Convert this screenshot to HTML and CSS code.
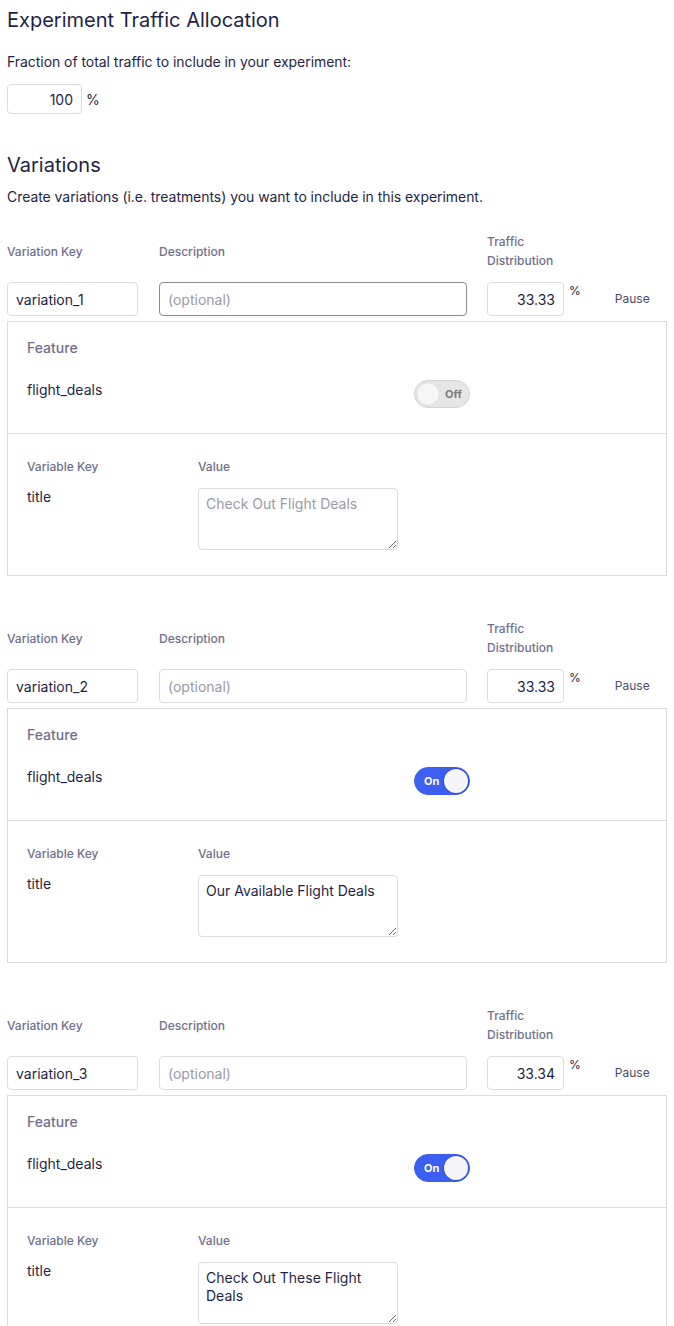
FILE: index.html
```html
<!DOCTYPE html>
<html>
<head>
<meta charset="utf-8">
<link rel="stylesheet" href="styles.css">
</head>
<body>
<div class="page">
  <h1 class="title">Experiment Traffic Allocation</h1>
  <p class="text frac">Fraction of total traffic to include in your experiment:</p>
  <div class="alloc">
    <input class="field num alloc-input" value="100">
    <span class="pct">%</span>
  </div>

  <h2 class="title var-title">Variations</h2>
  <p class="text create">Create variations (i.e. treatments) you want to include in this experiment.</p>

  <div class="variation">
    <div class="vrow labels">
      <div class="c-key">Variation Key</div>
      <div class="c-desc">Description</div>
      <div class="c-traffic">Traffic<br>Distribution</div>
    </div>
    <div class="vrow inputs">
      <input class="field c-key" value="variation_1">
      <input class="field c-desc focus" placeholder="(optional)">
      <input class="field num c-traffic" value="33.33">
      <span class="sup">%</span>
      <span class="pause">Pause</span>
    </div>
    <div class="panel">
      <div class="feature">
        <div class="flabel">Feature</div>
        <div class="frow">
          <div class="fname">flight_deals</div>
          <div class="toggle off"><span class="knob"></span><span class="tlabel">Off</span></div>
        </div>
      </div>
      <div class="vars">
        <div class="grid">
          <div class="flabel">Variable Key</div>
          <div class="flabel">Value</div>
          <div class="fname vk">title</div>
          <textarea class="area" placeholder="Check Out Flight Deals"></textarea>
        </div>
      </div>
    </div>
  </div>

  <div class="variation">
    <div class="vrow labels">
      <div class="c-key">Variation Key</div>
      <div class="c-desc">Description</div>
      <div class="c-traffic">Traffic<br>Distribution</div>
    </div>
    <div class="vrow inputs">
      <input class="field c-key" value="variation_2">
      <input class="field c-desc" placeholder="(optional)">
      <input class="field num c-traffic" value="33.33">
      <span class="sup">%</span>
      <span class="pause">Pause</span>
    </div>
    <div class="panel">
      <div class="feature">
        <div class="flabel">Feature</div>
        <div class="frow">
          <div class="fname">flight_deals</div>
          <div class="toggle on"><span class="tlabel">On</span><span class="knob"></span></div>
        </div>
      </div>
      <div class="vars">
        <div class="grid">
          <div class="flabel">Variable Key</div>
          <div class="flabel">Value</div>
          <div class="fname vk">title</div>
          <textarea class="area">Our Available Flight Deals</textarea>
        </div>
      </div>
    </div>
  </div>

  <div class="variation">
    <div class="vrow labels">
      <div class="c-key">Variation Key</div>
      <div class="c-desc">Description</div>
      <div class="c-traffic">Traffic<br>Distribution</div>
    </div>
    <div class="vrow inputs">
      <input class="field c-key" value="variation_3">
      <input class="field c-desc" placeholder="(optional)">
      <input class="field num c-traffic" value="33.34">
      <span class="sup">%</span>
      <span class="pause">Pause</span>
    </div>
    <div class="panel">
      <div class="feature">
        <div class="flabel">Feature</div>
        <div class="frow">
          <div class="fname">flight_deals</div>
          <div class="toggle on"><span class="tlabel">On</span><span class="knob"></span></div>
        </div>
      </div>
      <div class="vars">
        <div class="grid">
          <div class="flabel">Variable Key</div>
          <div class="flabel">Value</div>
          <div class="fname vk">title</div>
          <textarea class="area">Check Out These Flight Deals</textarea>
        </div>
      </div>
    </div>
  </div>
</div>
</body>
</html>
```

FILE: styles.css
```css
html, body {
  margin: 0;
  padding: 0;
  background: #fff;
}
body {
  font-family: Inter, "Noto Sans", sans-serif;
  color: #1f1f45;
  font-size: 14px;
}
.page {
  padding: 8px 7px 0 7px;
}
.title {
  margin: 0;
  font-size: 20px;
  line-height: 24px;
  font-weight: 400;
  color: #1f1f45;
}
.text {
  margin: 0;
  font-size: 14px;
  line-height: 20px;
  letter-spacing: -0.05px;
}
.frac {
  margin-top: 20px;
}
.alloc {
  margin-top: 12px;
  display: flex;
  align-items: center;
  gap: 4px;
}
.field {
  box-sizing: border-box;
  border: 1px solid #dcdce0;
  border-radius: 4px;
  font-family: inherit;
  font-size: 14px;
  color: #1f1f45;
  padding: 0 8px;
  margin: 0;
  outline: none;
  background: #fff;
}
.field::placeholder {
  color: #9a9aa4;
}
.num {
  text-align: right;
}
.alloc-input {
  width: 75px;
  height: 30px;
}
.pct {
  font-size: 14px;
}
.var-title {
  margin-top: 39px;
}
.create {
  margin-top: 10px;
}
.variation {
  margin-top: 25px;
}
.variation + .variation {
  margin-top: 43px;
}
.vrow {
  display: flex;
}
.labels {
  align-items: center;
  font-size: 12px;
  line-height: 19px;
  color: #6f6f8c;
  font-weight: 500;
}
.c-key {
  width: 131px;
  flex: none;
}
.c-desc {
  width: 308px;
  margin-left: 21px;
  flex: none;
}
.c-traffic {
  width: 77px;
  margin-left: 20px;
  flex: none;
}
.inputs {
  margin-top: 12px;
  height: 34px;
  align-items: stretch;
}
.inputs .field {
  height: 34px;
}
.focus {
  border-color: #8a8a92;
}
.sup {
  margin-left: 5px;
  font-size: 12px;
  line-height: 14px;
  align-self: flex-start;
  margin-top: 2px;
}
.pause {
  margin-left: 34px;
  font-size: 12px;
  color: #4b4b6b;
  align-self: center;
  line-height: 14px;
}
.panel {
  margin-top: 5px;
  border: 1px solid #dcdce0;
  width: 660px;
  box-sizing: border-box;
}
.feature {
  padding: 17px 19px 0 19px;
  height: 112px;
  box-sizing: border-box;
  border-bottom: 1px solid #dcdce0;
}
.flabel {
  font-size: 14px;
  line-height: 18px;
  color: #6f6f8c;
  font-weight: 500;
}
.frow {
  display: flex;
  margin-top: 24px;
}
.fname {
  font-size: 14px;
  line-height: 18px;
  color: #1f1f45;
}
.frow .fname {
  width: 387px;
  flex: none;
}
.toggle {
  width: 56px;
  height: 28px;
  border-radius: 14px;
  box-sizing: border-box;
  display: flex;
  align-items: center;
  margin-top: -1px;
  font-size: 11px;
  font-weight: 700;
  padding: 1px;
}
.toggle.off {
  background: #e6e6e6;
  border: 1px solid #d4d4d4;
  color: #7c7c7c;
}
.toggle.off .knob {
  width: 24px;
  height: 24px;
  border-radius: 50%;
  background: #f6f6f6;
  border: 1px solid #dcdcdc;
  box-sizing: border-box;
}
.toggle.off .tlabel {
  margin-left: 5px;
}
.toggle.on {
  background: #3c5ff2;
  border: 1px solid #3c5ff2;
  color: #fff;
  justify-content: space-between;
}
.toggle.on .tlabel {
  margin-left: 8px;
}
.toggle.on .knob {
  width: 24px;
  height: 24px;
  border-radius: 50%;
  background: #f5f5f7;
  box-shadow: 0 0 0 1px #2f4fd8;
}
.vars {
  padding: 24px 19px 25px 19px;
}
.grid {
  display: grid;
  grid-template-columns: 171px 200px;
  row-gap: 12px;
}
.grid .flabel {
  font-size: 12px;
}
.vk {
  line-height: 18px;
}
.area {
  box-sizing: border-box;
  width: 200px;
  height: 62px;
  border: 1px solid #dcdce0;
  border-radius: 4px;
  font-family: inherit;
  font-size: 14px;
  line-height: 18px;
  color: #1f1f45;
  padding: 6px 7px;
  margin: 0;
  outline: none;
  resize: both;
}
.area::placeholder {
  color: #9a9aa4;
}
```
